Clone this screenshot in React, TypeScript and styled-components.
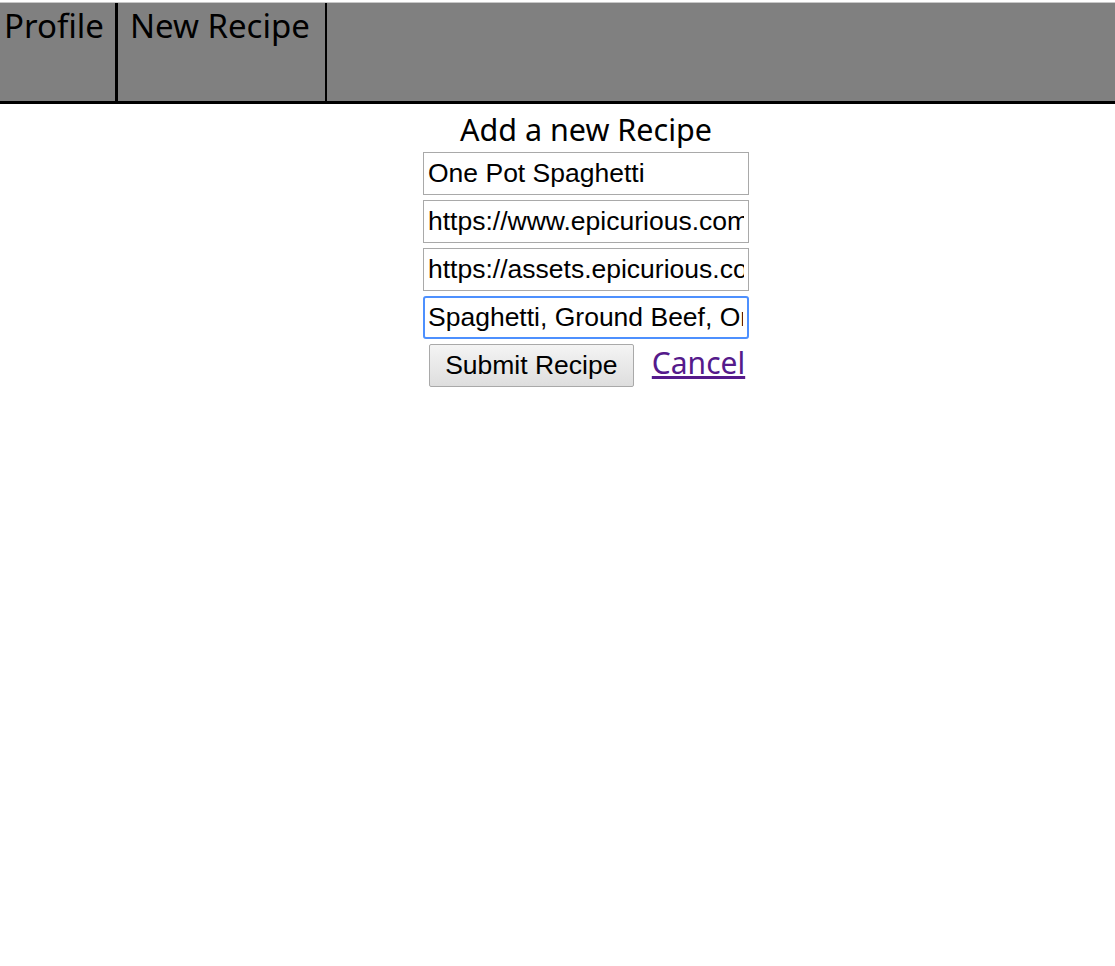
import React, { useState } from 'react';
import styled, { createGlobalStyle } from 'styled-components';

const GlobalStyle = createGlobalStyle`
  body {
    margin: 0;
    background: #fff;
    font-family: "Open Sans", "Noto Sans", sans-serif;
  }
`;

const Nav = styled.nav`
  display: flex;
  height: 98px;
  margin-top: 2px;
  border-top: 1px solid #c8c8c8;
  background: #808080;
  border-bottom: 3px solid #000;
`;

const NavItem = styled.a<{ $edge: number; $lead: number; $trail: number }>`
  display: block;
  padding: 0 ${(p) => p.$trail}px 0 ${(p) => p.$lead}px;
  border-right: ${(p) => p.$edge}px solid #000;
  color: #000;
  font-family: "Noto Sans", "Open Sans", sans-serif;
  font-size: 33px;
  line-height: 46px;
  text-decoration: none;
  cursor: pointer;
`;

const Main = styled.main`
  display: flex;
  flex-direction: column;
  align-items: center;
  padding-left: 57px;
  padding-top: 5px;
`;

const Title = styled.h2`
  margin: 0 0 2px;
  font-family: "Noto Sans", sans-serif;
  font-size: 30.5px;
  font-weight: 400;
  line-height: 41px;
  color: #000;
`;

const Form = styled.form`
  display: flex;
  flex-direction: column;
  align-items: center;
  gap: 5px;
`;

const Field = styled.input<{ $active?: boolean }>`
  box-sizing: border-box;
  width: 326px;
  height: 43px;
  padding: 0 4px;
  border: ${(p) => (p.$active ? '2px solid #4d90fe' : '1px solid #a9a9a9')};
  border-radius: ${(p) => (p.$active ? '3px' : '0')};
  padding-left: ${(p) => (p.$active ? '3px' : '4px')};
  font-family: "Liberation Sans", Arial, sans-serif;
  font-size: 26.5px;
  color: #000;
  outline: none;
`;

const Actions = styled.div`
  display: flex;
  align-items: center;
  gap: 18px;
  padding-left: 2px;
`;

const SubmitButton = styled.button`
  box-sizing: border-box;
  width: 205px;
  height: 43px;
  border: 1px solid #a9a9a9;
  border-radius: 2px;
  background: linear-gradient(#f4f4f4, #dedede);
  font-family: "Liberation Sans", Arial, sans-serif;
  font-size: 26.5px;
  color: #000;
  padding: 0;
`;

const CancelLink = styled.a`
  font-family: "Noto Sans", sans-serif;
  font-size: 30px;
  color: #551a8b;
  text-decoration: underline;
  line-height: 40px;
  margin-top: -6px;
`;

export default function App() {
  const [title, setTitle] = useState('One Pot Spaghetti');
  const [url, setUrl] = useState('https://www.epicurious.com/recipes/food/views/one-pot-spaghetti');
  const [image, setImage] = useState('https://assets.epicurious.com/photos/one-pot-spaghetti.jpg');
  const [ingredients, setIngredients] = useState('Spaghetti, Ground Beef, Onion, Garlic');

  return (
    <>
      <GlobalStyle />
      <Nav>
        <NavItem $edge={3} $lead={4} $trail={11}>Profile</NavItem>
        <NavItem $edge={2} $lead={12} $trail={15}>New Recipe</NavItem>
      </Nav>
      <Main>
        <Title>Add a new Recipe</Title>
        <Form onSubmit={(e) => e.preventDefault()}>
          <Field value={title} onChange={(e) => setTitle(e.target.value)} />
          <Field value={url} onChange={(e) => setUrl(e.target.value)} />
          <Field value={image} onChange={(e) => setImage(e.target.value)} />
          <Field $active value={ingredients} onChange={(e) => setIngredients(e.target.value)} />
          <Actions>
            <SubmitButton type="submit">Submit Recipe</SubmitButton>
            <CancelLink href="#">Cancel</CancelLink>
          </Actions>
        </Form>
      </Main>
    </>
  );
}
